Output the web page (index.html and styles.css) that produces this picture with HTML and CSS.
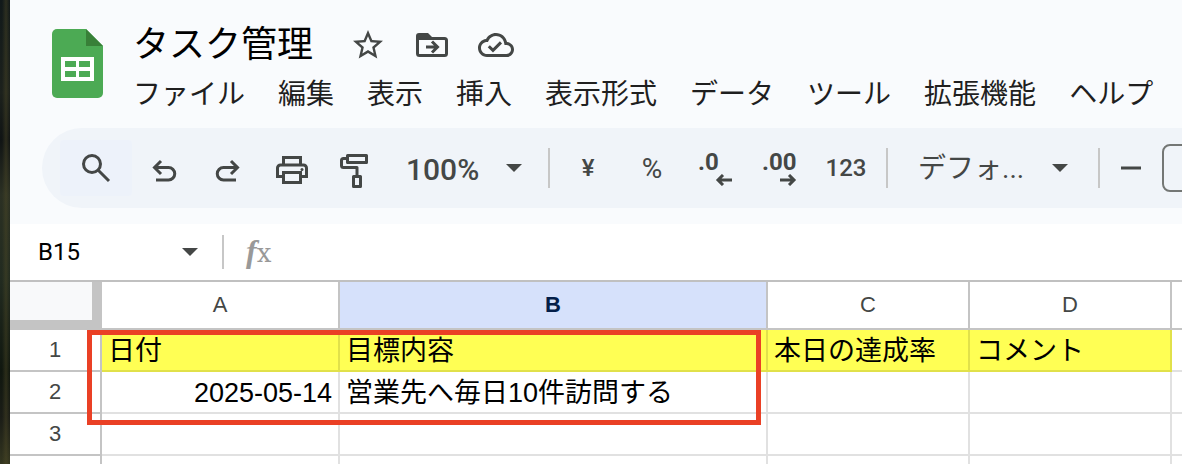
FILE: index.html
```
<!DOCTYPE html>
<html lang="ja">
<head>
  <meta charset="UTF-8" />
  <meta name="viewport" content="width=device-width, initial-scale=1" />
  <title>タスク管理</title>
  <link rel="stylesheet" href="styles.css">
</head>
<body>

  <div class="desktop-edge"></div>

  <div class="app">
    <header class="header">
      <svg class="logo" width="51" height="69" viewBox="0 0 51 69">
        <path d="M5 0H34L51 17V64a5 5 0 0 1-5 5H5a5 5 0 0 1-5-5V5a5 5 0 0 1 5-5z" fill="#4caa54"/>
        <path d="M34 0L51 17H34z" fill="#388038"/>
        <path d="M9 28H42V52H9zM13 32V38H24V32zM27 32V38H38V32zM13 42V48H24V42zM27 42V48H38V42z" fill="#fff" fill-rule="evenodd"/>
      </svg>

      <div class="header-main">
        <div class="title-row">
          <h1 class="title">タスク管理</h1>
          <div class="title-actions">
            <button class="icon-btn" aria-label="スター">
              <svg width="36" height="36" viewBox="0 0 24 24"><path fill="#444746" d="M22 9.24l-7.19-.62L12 2 9.19 8.63 2 9.24l5.46 4.73L5.82 21 12 17.27 18.18 21l-1.63-7.03L22 9.24zM12 15.4l-3.76 2.27 1-4.28-3.32-2.88 4.38-.38L12 6.1l1.71 4.04 4.38.38-3.32 2.88 1 4.28L12 15.4z"/></svg>
            </button>
            <button class="icon-btn" aria-label="移動">
              <svg width="36" height="36" viewBox="0 0 36 36" fill="none" stroke="#444746" stroke-width="3">
                <path d="M3.500 9V26.500a2 2 0 0 0 2 2H30.500a2 2 0 0 0 2-2V13.500a2 2 0 0 0-2-2H5"/>
                <path d="M2 13V9a3 3 0 0 1 3-3H14L18 10V13z" fill="#444746" stroke="none"/>
                <path d="M12 20H22M18 14.500L23.500 20L18 25.500"/>
              </svg>
            </button>
            <button class="icon-btn" aria-label="保存済み">
              <svg width="36" height="36" viewBox="0 0 24 24"><path fill="#444746" d="M19.35 10.04C18.67 6.59 15.64 4 12 4 9.11 4 6.6 5.64 5.35 8.04 2.34 8.36 0 10.91 0 14c0 3.31 2.69 6 6 6h13c2.76 0 5-2.24 5-5 0-2.64-2.05-4.78-4.65-4.96zM19 18H6c-2.21 0-4-1.79-4-4 0-2.05 1.53-3.76 3.56-3.97l1.07-.11.5-.95C8.08 7.14 9.94 6 12 6c2.62 0 4.88 1.86 5.39 4.43l.3 1.5 1.53.11c1.56.1 2.78 1.41 2.78 2.96 0 1.65-1.35 3-3 3zm-9-3.82l-2.09-2.09L6.5 13.500 10 17l6.010-6.010-1.410-1.410z"/></svg>
            </button>
          </div>
        </div>

        <nav class="menu">
          <button>ファイル</button>
          <button>編集</button>
          <button>表示</button>
          <button>挿入</button>
          <button>表示形式</button>
          <button>データ</button>
          <button>ツール</button>
          <button>拡張機能</button>
          <button>ヘルプ</button>
        </nav>
      </div>
    </header>

    <div class="toolbar-wrap">
      <div class="toolbar">
        <button class="tool tool-search" aria-label="検索">
          <svg width="40" height="40" viewBox="0 0 40 40"><circle cx="16" cy="16" r="8.500"/><path d="M22 22L33 33"/></svg>
        </button>
        <button class="tool" aria-label="元に戻す">
          <svg width="40" height="40" viewBox="0 0 40 40"><path d="M10 19.500H24.500a6.250 6.250 0 0 1 0 12.500H12M17 13L10.500 19.500L17 26"/></svg>
        </button>
        <button class="tool" aria-label="やり直し">
          <svg width="40" height="40" viewBox="0 0 40 40"><path d="M30 19.500H15.500a6.250 6.250 0 0 0 0 12.500H28M23 13L29.500 19.500L23 26"/></svg>
        </button>
        <button class="tool" aria-label="印刷">
          <svg width="40" height="40" viewBox="0 0 40 40"><path d="M11.500 17V9.500H28.500V17M11.500 28.500H5.500V20a3 3 0 0 1 3-3H31.500a3 3 0 0 1 3 3V28.500H28.500M11.500 24.500H28.500V34.500H11.500z"/><circle class="dot" cx="30" cy="21.500" r="1.500"/></svg>
        </button>
        <button class="tool" aria-label="書式を貼り付け">
          <svg width="40" height="40" viewBox="0 0 40 40" stroke-linejoin="round"><path d="M11.500 7.500H30.500V14.500H11.500zM11 10.500H7.500a2 2 0 0 0-2 2V17.500a2 2 0 0 0 2 2H21V28M17.500 28.500H24.500V38.500H17.500z"/></svg>
        </button>

        <div class="dropdown zoom">
          <select aria-label="ズーム"><option>100%</option></select>
          <svg class="caret" width="16" height="8" viewBox="0 0 16 8"><path d="M0 0H16L8 8z"/></svg>
        </div>
        <span class="divider"></span>

        <button class="tool currency">¥</button>
        <button class="tool percent">%</button>
        <button class="tool decimal" aria-label="小数点以下の桁数を減らす">
          <span>.0</span>
          <svg width="36" height="12" viewBox="0 0 36 12"><path d="M34 6H20M25 1L20 6L25 11"/></svg>
        </button>
        <button class="tool decimal" aria-label="小数点以下の桁数を増やす">
          <span>.00</span>
          <svg width="36" height="12" viewBox="0 0 36 12"><path d="M18 6H32M27 1L32 6L27 11"/></svg>
        </button>
        <button class="tool number">123</button>
        <span class="divider"></span>

        <div class="dropdown font">
          <select aria-label="フォント"><option>デフォ...</option></select>
          <svg class="caret" width="16" height="8" viewBox="0 0 16 8"><path d="M0 0H16L8 8z"/></svg>
        </div>
        <span class="divider"></span>

        <button class="tool minus" aria-label="フォントサイズを縮小">
          <svg width="40" height="40" viewBox="0 0 40 40"><path d="M10 20H30"/></svg>
        </button>
        <input class="font-size" type="text" aria-label="フォントサイズ">
      </div>
    </div>

    <div class="formula-bar">
      <input class="name-box" type="text" value="B15" aria-label="名前ボックス">
      <svg class="caret" width="16" height="8" viewBox="0 0 16 8"><path d="M0 0H16L8 8z"/></svg>
      <span class="divider"></span>
      <span class="fx"><i>f</i>x</span>
    </div>

    <div class="sheet">
      <table>
        <colgroup>
          <col class="col-row">
          <col class="col-a">
          <col class="col-b">
          <col class="col-c">
          <col class="col-d">
          <col>
        </colgroup>
        <thead>
          <tr>
            <th class="corner"></th>
            <th>A</th>
            <th class="selected">B</th>
            <th>C</th>
            <th>D</th>
            <th></th>
          </tr>
        </thead>
        <tbody>
          <tr class="yellow">
            <th>1</th>
            <td>日付</td>
            <td>目標内容</td>
            <td>本日の達成率</td>
            <td>コメント</td>
            <td></td>
          </tr>
          <tr>
            <th>2</th>
            <td class="date">2025-05-14</td>
            <td>営業先へ毎日10件訪問する</td>
            <td></td>
            <td></td>
            <td></td>
          </tr>
          <tr>
            <th>3</th>
            <td></td>
            <td></td>
            <td></td>
            <td></td>
            <td></td>
          </tr>
          <tr>
            <th></th>
            <td></td>
            <td></td>
            <td></td>
            <td></td>
            <td></td>
          </tr>
        </tbody>
      </table>
      <div class="highlight"></div>
    </div>
  </div>

</body>
</html>
```
FILE: styles.css
```
* {
  margin: 0;
  padding: 0;
  box-sizing: border-box;
}

body {
  display: flex;
  height: 100vh;
  overflow: hidden;
  background: #fff;
  font-family: "Liberation Sans", "Noto Sans CJK JP", sans-serif;
}

button,
input,
select {
  border: none;
  background: none;
  font: inherit;
  color: inherit;
}

button {
  cursor: pointer;
}

svg {
  display: block;
  flex-shrink: 0;
}

/* Desktop behind the window */
.desktop-edge {
  flex: 0 0 10px;
  background:
    linear-gradient(90deg, transparent 20%, rgba(84, 78, 40, 0.4) 60%, transparent),
    linear-gradient(#11191a, #1c211c 20%, #101414 30%, #2b3023 42%, #222b20 60%, #10170f 80%, #1b1d17 90%, #33351f);
}

.app {
  flex: 1;
  min-width: 0;
  overflow: hidden;
}

/* Header */
.header {
  display: flex;
  gap: 30px;
  padding: 18px 0 10px 42px;
  background: #f9fbfd;
}

.logo {
  margin-top: 11px;
}

.title-row {
  display: flex;
  align-items: center;
  gap: 37px;
  height: 54px;
}

.title {
  font-size: 36px;
  line-height: 52px;
  font-weight: 400;
  white-space: nowrap;
  color: #000;
}

.title-actions {
  display: flex;
  gap: 28px;
}

.menu {
  display: flex;
  gap: 33px;
}

.menu button {
  font-size: 28px;
  line-height: 46px;
  white-space: nowrap;
  color: #1f1f1f;
}

/* Toolbar */
.toolbar-wrap {
  padding: 0 0 16px 32px;
  background: #f9fbfd;
}

.toolbar {
  display: flex;
  align-items: center;
  height: 80px;
  padding-left: 18px;
  border-radius: 40px 0 0 40px;
  background: #f0f4f9;
  font-family: Roboto, "Noto Sans CJK JP", sans-serif;
  color: #444746;
  overflow: hidden;
}

.tool {
  display: flex;
  flex: 0 0 64px;
  align-items: center;
  justify-content: center;
  height: 56px;
  font-size: 24px;
  font-weight: 500;
}

.tool svg {
  fill: none;
  stroke: #444746;
  stroke-width: 3;
}

.tool .dot {
  fill: #444746;
  stroke: none;
}

.tool-search {
  flex-basis: 72px;
  border-radius: 4px;
  background: #edf2fa;
}

.tool.currency {
  margin-left: 6px;
}

.tool.percent {
  font-size: 28px;
  font-weight: 400;
}

.tool.decimal {
  flex-direction: column;
  font-weight: 700;
  line-height: 24px;
  text-align: left;
}

.tool.decimal span {
  width: 36px;
}

.tool.number {
  flex-basis: 68px;
  margin-right: 6px;
}

.tool.minus {
  flex-basis: 62px;
}

.divider {
  flex: 0 0 2px;
  height: 40px;
  background: #c7c7c7;
}

.dropdown {
  display: flex;
  flex-shrink: 0;
  align-items: center;
}

.dropdown select {
  appearance: none;
  height: 44px;
}

.caret {
  fill: #444746;
}

.zoom {
  padding: 0 26px 0 18px;
}

.zoom select {
  width: 100px;
  padding-top: 2px;
  font-size: 30px;
  font-weight: 500;
}

.font {
  padding: 0 30px;
}

.font select {
  width: 134px;
  font-size: 28px;
}

.font-size {
  flex: 0 0 80px;
  height: 48px;
  border: 2px solid #747775;
  border-radius: 8px;
}

/* Formula bar */
.formula-bar {
  display: flex;
  align-items: center;
  height: 56px;
  padding-left: 28px;
}

.name-box {
  width: 144px;
  font-family: Roboto, sans-serif;
  font-size: 24px;
  color: #000;
}

.formula-bar .divider {
  height: 34px;
  margin: 0 22px 0 24px;
}

.fx {
  font-family: "DejaVu Serif", serif;
  font-size: 26px;
  line-height: 36px;
  color: #999;
}

.fx i {
  font-family: "Liberation Serif", serif;
  font-size: 32px;
  font-weight: 700;
}

/* Sheet */
.sheet {
  position: relative;
  border-top: 2px solid #c0c0c0;
}

table {
  width: 100%;
  table-layout: fixed;
  border-collapse: separate;
  border-spacing: 0;
}

.col-row {
  width: 92px;
}

.col-a {
  width: 238px;
}

.col-b {
  width: 428px;
}

.col-c,
.col-d {
  width: 202px;
}

th {
  border-right: 2px solid #c4c4c4;
  border-bottom: 2px solid #c4c4c4;
  font-size: 22px;
  font-weight: 400;
  color: #444746;
}

thead th {
  height: 48px;
}

.corner {
  border-right: 10px solid #c4c4c4;
  border-bottom: 10px solid #c4c4c4;
  background: #f8f9fa;
}

.selected {
  background: #d6e1fb;
  font-weight: 700;
  color: #041e49;
}

tbody th,
td {
  height: 42px;
}

td {
  padding: 2px 6px 0;
  border-right: 2px solid #e1e1e1;
  border-bottom: 2px solid #e1e1e1;
  font-size: 27px;
  line-height: 38px;
  white-space: nowrap;
  color: #000;
}

.yellow td:not(:last-child) {
  border-color: #e1e14a;
  background: #ffff54;
}

/* The last column runs on past the window */
th:last-child,
td:last-child {
  border-right: none;
}

.date {
  text-align: right;
}

/* Frame drawn over the first two rows */
.highlight {
  position: absolute;
  top: 48px;
  left: 77px;
  width: 674px;
  height: 95px;
  border: 5px solid #ea4025;
}
```
